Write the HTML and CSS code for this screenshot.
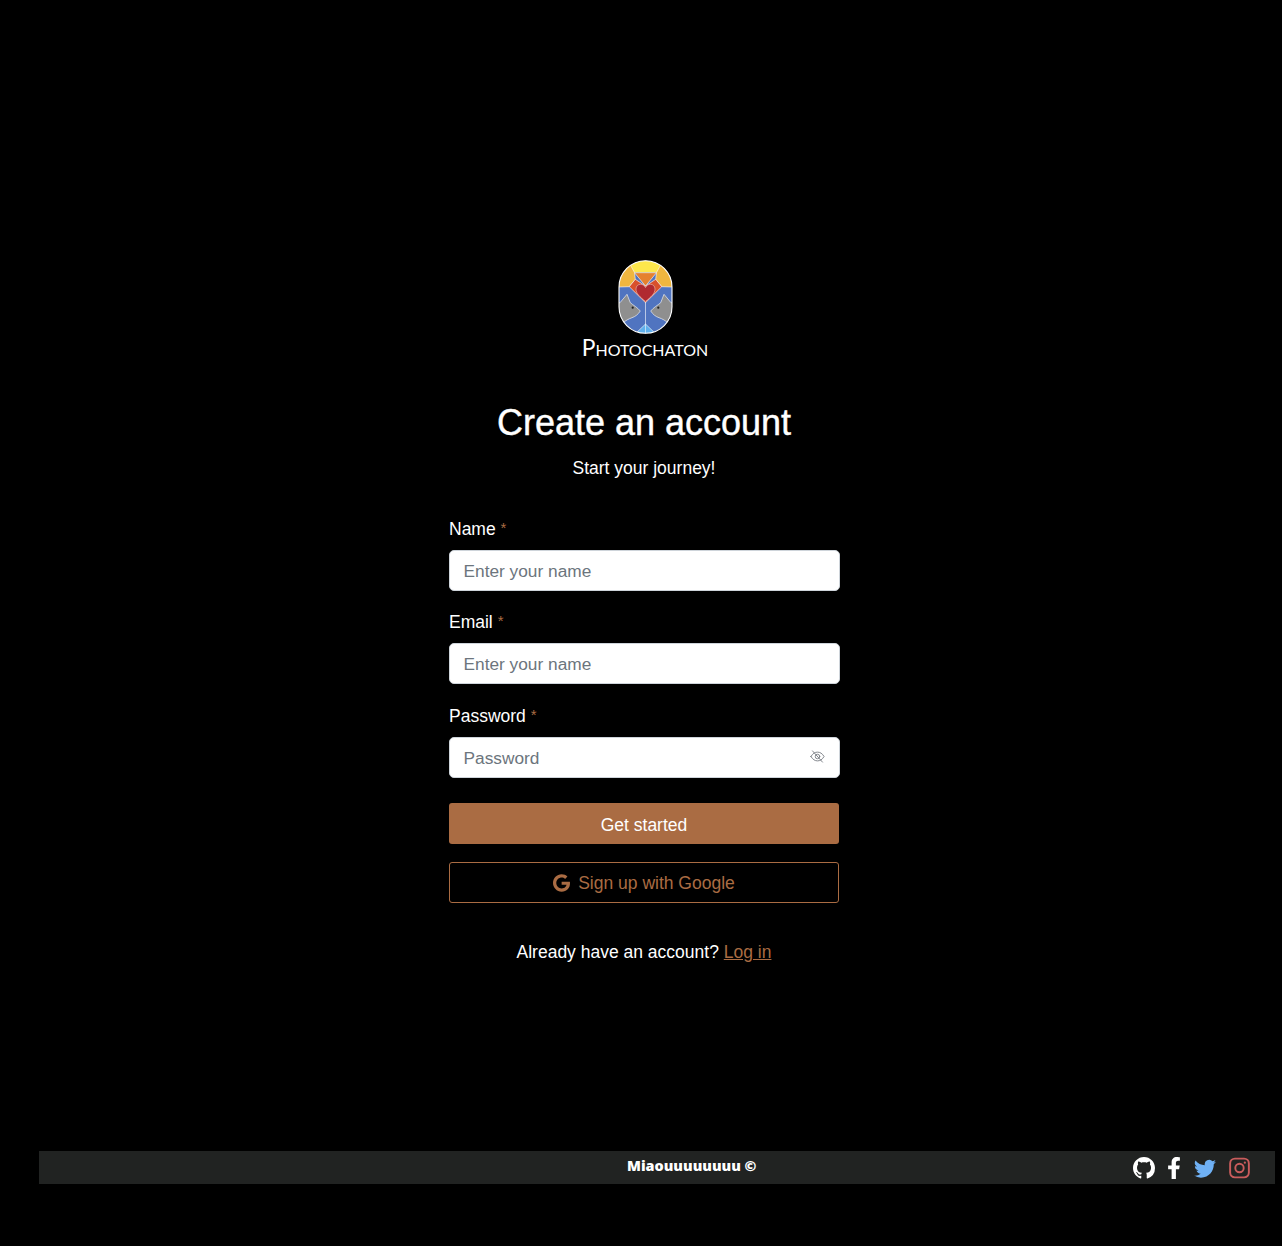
FILE: index.html
```html
<!DOCTYPE html>
<html lang="en">
<head>
    <meta charset="UTF-8">
    <title>Photochaton</title>
    <link rel="stylesheet" href="styles.css">
</head>
<body>
    <main class="signup">
        <div class="brand">
            <svg class="brand-logo" viewBox="0 0 55 74" width="55" height="74">
                <defs>
                    <clipPath id="shield"><rect x="1" y="0.7" width="53" height="72.6" rx="26.5"/></clipPath>
                </defs>
                <g clip-path="url(#shield)" stroke="#fff" stroke-width="0.6" stroke-linejoin="round">
                    <rect width="55" height="74" fill="#5074c0"/>
                    <polygon points="0,0 55,0 55,12.5 0,12.5" fill="#fde74c" stroke="none"/>
                    <polygon points="11.3,3 16.5,12.5 17.3,19.3 11.3,26.7 0,27 0,3" fill="#f0b63f"/>
                    <polygon points="43.7,3 38.5,12.5 37.7,19.3 43.7,26.7 55,27 55,3" fill="#f0b63f"/>
                    <polygon points="17.3,19.3 11.3,26.7 27.5,42.7 43.7,26.7 37.7,19.3 27.5,26" fill="#d9512c"/>
                    <polygon points="16.5,12.7 38.5,12.7 27.5,26" fill="#e5812f"/>
                    <path d="M27.5 41.3 C22 37 18 33.5 18 29 C18 26 20.2 24.3 22.5 24.3 C24.7 24.3 26.5 25.6 27.5 27.6 C28.5 25.6 30.3 24.3 32.5 24.3 C34.8 24.3 37 26 37 29 C37 33.5 33 37 27.5 41.3 Z" fill="#b02a30" stroke-width="0.4"/>
                    <path d="M0 43 L2 42.7 L9 34.3 L12.3 42.7 C15 45 19.5 47.5 22.3 51 C20 54.5 17.5 56.5 14 57.7 C10.5 59 7.5 60.5 5 63 L0 60 Z" fill="#8f8f8f"/>
                    <path d="M55 43 L53 42.7 L46 34.3 L42.7 42.7 C40 45 35.5 47.5 32.7 51 C35 54.5 37.5 56.5 41 57.7 C44.5 59 47.5 60.5 50 63 L55 60 Z" fill="#8f8f8f"/>
                    <line x1="27.5" y1="42" x2="27.5" y2="74"/>
                    <polygon points="16,75 27.5,64 39,75" fill="#5fb0ec"/>
                    <line x1="27.5" y1="64" x2="27.5" y2="74"/>
                </g>
                <circle cx="14.7" cy="47.7" r="1.1" fill="#222"/>
                <circle cx="40.3" cy="47.7" r="1.1" fill="#222"/>
                <rect x="1" y="0.7" width="53" height="72.6" rx="26.5" fill="none" stroke="#fff" stroke-width="1.1"/>
            </svg>
            <div class="brand-name">Photochaton</div>
        </div>

        <h1>Create an account</h1>
        <p class="subtitle">Start your journey!</p>

        <form class="signup-form">
            <div class="field">
                <label>Name <span class="required">*</span></label>
                <input type="text" placeholder="Enter your name">
            </div>
            <div class="field">
                <label>Email <span class="required">*</span></label>
                <input type="text" placeholder="Enter your name">
            </div>
            <div class="field">
                <label>Password <span class="required">*</span></label>
                <div class="password-box">
                    <input type="password" placeholder="Password">
                    <svg class="eye" viewBox="0 0 24 24" width="15" height="15" fill="none" stroke="#7b7f85" stroke-width="1.5" stroke-linecap="round" stroke-linejoin="round">
                        <path d="M1.5 12 C4.5 7 8 5 12 5 C16 5 19.5 7 22.5 12 C19.5 17 16 19 12 19 C8 19 4.5 17 1.5 12 Z"/>
                        <circle cx="12" cy="12" r="3.6"/>
                        <line x1="4" y1="3" x2="20" y2="21"/>
                    </svg>
                </div>
            </div>
            <button type="button" class="btn-primary">Get started</button>
            <button type="button" class="btn-google">
                <svg viewBox="0 0 488 512" width="17" height="18" fill="#aa6c43">
                    <path d="M488 261.8C488 403.3 391.1 504 248 504 110.8 504 0 393.2 0 256S110.8 8 248 8c66.8 0 123 24.5 166.3 64.9l-67.5 64.9C258.5 52.6 94.3 116.6 94.3 256c0 86.5 69.1 156.6 153.7 156.6 98.2 0 135-70.4 140.8-106.9H248v-85.3h236.1c2.3 12.7 3.9 24.9 3.9 41.4z"/>
                </svg>
                Sign up with Google
            </button>
        </form>

        <p class="login-line">Already have an account? <a href="#">Log in</a></p>
    </main>

    <footer>
        <span class="footer-text">Miaouuuuuuuu ©</span>
        <div class="social">
            <svg viewBox="0 0 16 16" width="22" height="22" fill="#fff">
                <path d="M8 0C3.58 0 0 3.58 0 8c0 3.54 2.29 6.53 5.47 7.59.4.07.55-.17.55-.38 0-.19-.01-.82-.01-1.49-2.01.37-2.53-.49-2.69-.94-.09-.23-.48-.94-.82-1.13-.28-.15-.68-.52-.01-.53.63-.01 1.08.58 1.23.82.72 1.21 1.87.87 2.33.66.07-.52.28-.87.51-1.07-1.78-.2-3.64-.89-3.64-3.95 0-.87.31-1.59.82-2.15-.08-.2-.36-1.02.08-2.12 0 0 .67-.21 2.2.82.64-.18 1.32-.27 2-.27.68 0 1.36.09 2 .27 1.53-1.04 2.2-.82 2.2-.82.44 1.1.16 1.92.08 2.12.51.56.82 1.27.82 2.15 0 3.07-1.87 3.75-3.65 3.95.29.25.54.73.54 1.48 0 1.07-.01 1.93-.01 2.2 0 .21.15.46.55.38A8.013 8.013 0 0016 8c0-4.42-3.58-8-8-8z"/>
            </svg>
            <svg class="fb" viewBox="20 0 280 512" width="12" height="22" fill="#fff">
                <path d="M279.14 288l14.22-92.66h-88.91v-60.13c0-25.35 12.42-50.06 52.24-50.06h40.42V6.26S260.43 0 225.36 0c-73.22 0-121.08 44.38-121.08 124.72v70.62H22.89V288h81.39v224h100.17V288z"/>
            </svg>
            <svg class="tw" viewBox="0 0 16 16" width="22" height="22" fill="#6fb1f5">
                <path d="M5.026 15c6.038 0 9.341-5.003 9.341-9.334 0-.14 0-.282-.006-.422A6.685 6.685 0 0 0 16 3.542a6.658 6.658 0 0 1-1.889.518 3.301 3.301 0 0 0 1.447-1.817 6.533 6.533 0 0 1-2.087.793A3.286 3.286 0 0 0 7.875 6.03a9.325 9.325 0 0 1-6.767-3.429 3.289 3.289 0 0 0 1.018 4.382A3.323 3.323 0 0 1 .64 6.575v.045a3.288 3.288 0 0 0 2.632 3.218 3.203 3.203 0 0 1-.865.115 3.23 3.23 0 0 1-.614-.057 3.283 3.283 0 0 0 3.067 2.277A6.588 6.588 0 0 1 .78 13.58a6.32 6.32 0 0 1-.78-.045A9.344 9.344 0 0 0 5.026 15z"/>
            </svg>
            <svg class="ig" viewBox="0 0 22 22" width="21" height="22" fill="none" stroke="#c95c5c" stroke-width="2">
                <rect x="1.2" y="1.2" width="19.6" height="19.6" rx="5"/>
                <circle cx="11" cy="11" r="4.4"/>
                <circle cx="16.6" cy="5.4" r="1.2" fill="#c95c5c" stroke="none"/>
            </svg>
        </div>
    </footer>
</body>
</html>
```

FILE: styles.css
```css
body {
    font-family: "Liberation Sans", Arial, sans-serif;
    margin: 0;
    padding: 0;
    background-color: #000;
    color: #fff;
    height: 1246px;
    overflow: hidden;
}
.signup {
    box-sizing: border-box;
    height: 1151px;
    width: 390px;
    margin-left: 449px;
    padding-top: 260px;
    text-align: center;
}
.brand {
    display: flex;
    flex-direction: column;
    align-items: center;
}
.brand-logo {
    display: block;
    margin-left: 2px;
}
.brand-name {
    font-family: Lato, sans-serif;
    font-variant: small-caps;
    font-size: 22.8px;
    line-height: 26px;
    margin-left: 2px;
}
h1 {
    font-size: 36px;
    font-weight: 400;
    -webkit-text-stroke: 0.4px #fff;
    line-height: 44px;
    margin: 41px 0 0;
}
.subtitle {
    font-size: 17.5px;
    line-height: 24px;
    margin: 11px 0 0;
}
.signup-form {
    margin-top: 37px;
    text-align: left;
}
.field {
    margin-bottom: 19px;
}
.field + .field + .field {
    margin-top: 20px;
}
.field label {
    display: block;
    font-size: 17.5px;
    line-height: 24px;
    margin-bottom: 9px;
}
.required {
    color: #aa6c43;
    font-size: 15px;
    line-height: 0;
    vertical-align: 2px;
}
input {
    display: block;
    box-sizing: border-box;
    width: calc(100% + 1px);
    height: 41px;
    padding: 2px 13.5px 0;
    background: #fff;
    border: 1px solid #ced4da;
    border-radius: 5px;
    font-family: inherit;
    font-size: 17.3px;
    color: #212529;
    outline: none;
}
input::placeholder {
    color: #6c757d;
}
.password-box {
    position: relative;
}
.eye {
    position: absolute;
    right: 14px;
    top: 12px;
}
.btn-primary, .btn-google {
    display: flex;
    align-items: center;
    justify-content: center;
    gap: 8px;
    box-sizing: border-box;
    width: 100%;
    height: 41px;
    border-radius: 3px;
    font-family: inherit;
    font-size: 17.5px;
    cursor: pointer;
}
.btn-primary {
    margin-top: 25px;
    padding-top: 4px;
    background-color: #aa6c43;
    border: none;
    color: #fff;
}
.btn-google {
    margin-top: 18px;
    padding-top: 2px;
    background-color: #000;
    border: 1px solid #aa6c43;
    color: #aa6c43;
}
.login-line {
    font-size: 17.5px;
    line-height: 24px;
    margin: 37px 0 0;
}
.login-line a {
    color: #aa6c43;
}
footer {
    display: flex;
    align-items: center;
    justify-content: space-between;
    box-sizing: border-box;
    height: 33px;
    margin-left: 39px;
    width: 1236px;
    padding: 0 25px 0 588px;
    background-color: #212322;
}
.footer-text {
    font-family: "Open Sans", sans-serif;
    font-weight: 800;
    font-size: 14.4px;
    margin-bottom: 5px;
}
.social {
    display: flex;
    align-items: center;
    gap: 13px;
}
.tw {
    margin-left: 1px;
}
```
